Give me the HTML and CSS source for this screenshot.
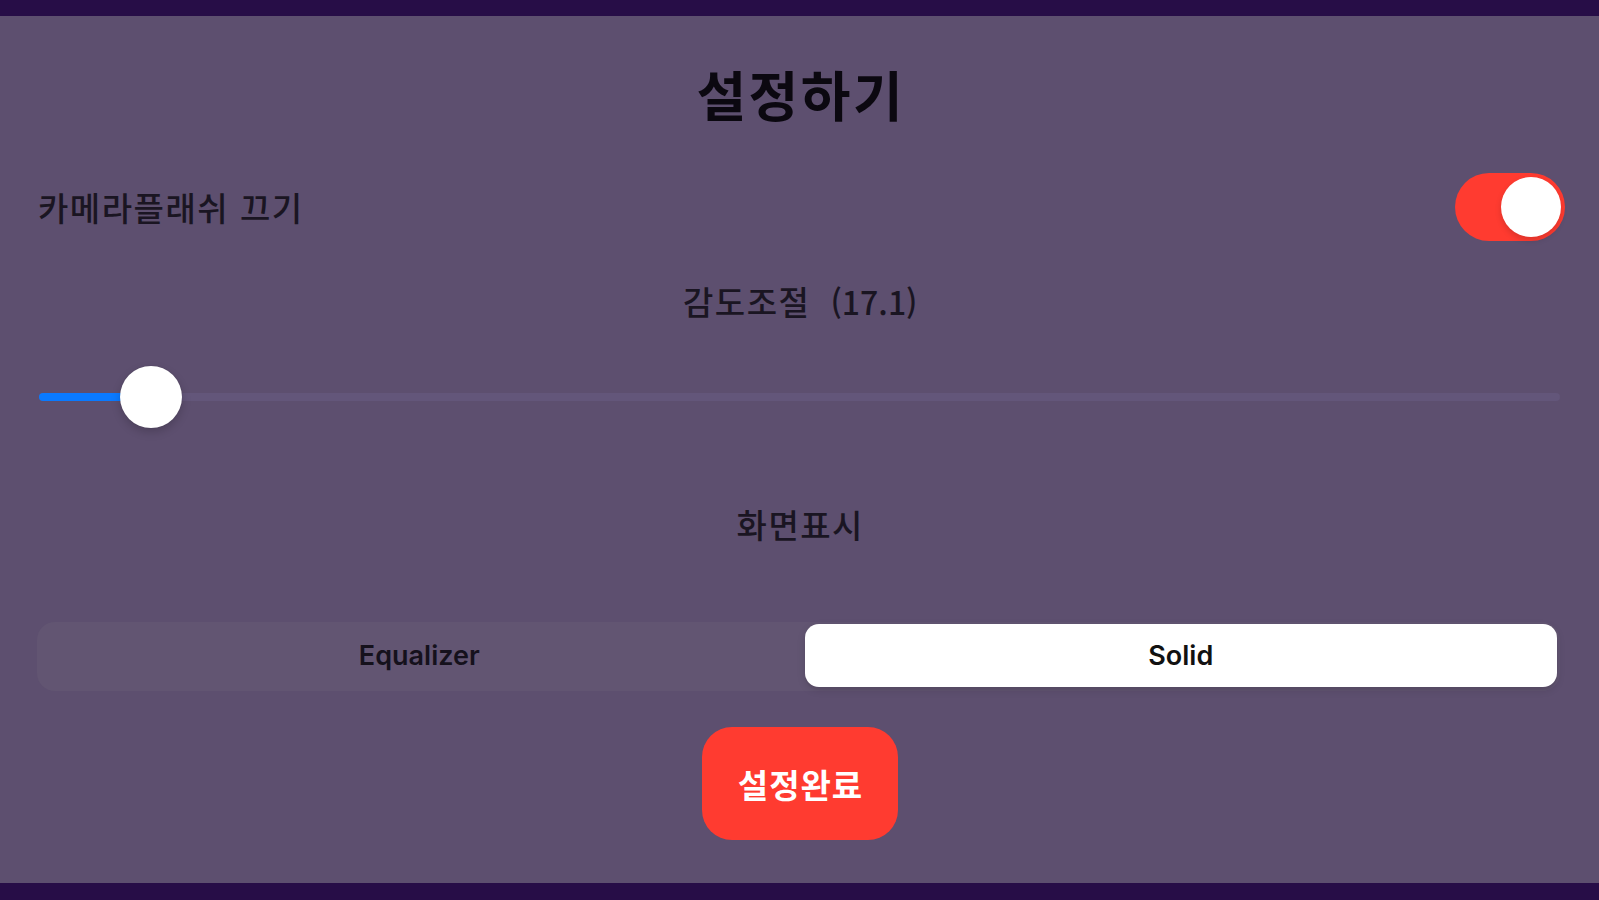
FILE: index.html
```html
<!DOCTYPE html>
<html lang="ko">
<head>
<meta charset="utf-8">
<title>설정하기</title>
<link rel="stylesheet" href="styles.css">
</head>
<body>
<div class="bar bar-top"></div>
<main class="content">
  <h1 class="title">설정하기</h1>
  <div class="row">
    <span class="label">카메라플래쉬 끄기</span>
    <div class="switch on"><div class="switch-knob"></div></div>
  </div>
  <div class="center-label">감도조절<span class="value">(17.1)</span></div>
  <div class="slider" style="--pct: 7.36%">
    <div class="slider-track"></div>
    <div class="slider-fill"></div>
    <div class="slider-knob"></div>
  </div>
  <div class="center-label display-label">화면표시</div>
  <div class="segmented">
    <div class="segment">Equalizer</div>
    <div class="segment selected">Solid</div>
  </div>
  <div class="actions">
    <button class="done-btn">설정완료</button>
  </div>
</main>
<div class="bar bar-bottom"></div>
</body>
</html>
```
FILE: styles.css
```css
* { box-sizing: border-box; }
html, body {
  margin: 0;
  padding: 0;
  height: 100%;
}
body {
  background: #5d4f6f;
  font-family: "Noto Sans CJK KR", "Noto Sans", sans-serif;
  color: #1a1522;
  display: flex;
  flex-direction: column;
  height: 900px;
  overflow: hidden;
}
.bar {
  background: #270d47;
  flex: 0 0 auto;
}
.bar-top { height: 16px; }
.bar-bottom { height: 17px; margin-top: auto; }

.content {
  flex: 1 1 auto;
  display: flex;
  flex-direction: column;
  padding: 0 37px;
}

.title {
  margin: 48px 0 0;
  font-size: 54px;
  line-height: 60px;
  font-weight: 700;
  letter-spacing: 2.5px;
  padding-left: 2.5px;
  text-align: center;
  color: #0b0810;
}

.row {
  margin-top: 49px;
  height: 68px;
  display: flex;
  align-items: center;
  justify-content: space-between;
}
.label {
  margin-left: 1px;
  font-size: 33px;
  line-height: 40px;
  font-weight: 500;
  letter-spacing: 1.5px;
}
.switch {
  width: 110px;
  height: 68px;
  border-radius: 34px;
  background: #ff3b30;
  margin-right: -3px;
  padding: 4px;
  display: flex;
  justify-content: flex-end;
}
.switch-knob {
  width: 60px;
  height: 60px;
  border-radius: 50%;
  background: #fff;
  box-shadow: 0 3px 6px rgba(0,0,0,0.15);
}

.center-label {
  margin-top: 40px;
  font-size: 33px;
  line-height: 40px;
  font-weight: 500;
  letter-spacing: 1.5px;
  padding-left: 1.5px;
  text-align: center;
}
.value {
  margin-left: 20px;
  font-size: 32px;
  letter-spacing: 0;
}

.slider {
  position: relative;
  margin: 45px 2px 0;
  height: 62px;
}
.slider-track {
  position: absolute;
  left: 0;
  right: 0;
  top: 27px;
  height: 8px;
  border-radius: 4px;
  background: #63567a;
}
.slider-fill {
  position: absolute;
  left: 0;
  top: 27px;
  height: 8px;
  width: var(--pct);
  border-radius: 4px;
  background: #0a7aff;
}
.slider-knob {
  position: absolute;
  top: 0;
  left: calc(var(--pct) - 31px);
  width: 62px;
  height: 62px;
  border-radius: 50%;
  background: #fff;
  box-shadow: 0 4px 10px rgba(0,0,0,0.18), 0 0 1px rgba(0,0,0,0.2);
}

.display-label {
  margin-top: 76px;
}

.segmented {
  margin: 78px 2px 0 0;
  height: 69px;
  padding: 2px 3px 4px;
  border-radius: 18px;
  background: #625572;
  display: grid;
  grid-template-columns: 1fr 1fr;
}
.segment {
  display: flex;
  align-items: center;
  justify-content: center;
  font-family: Inter, "Noto Sans", sans-serif;
  font-weight: 600;
  font-size: 27px;
  color: #15111c;
  border-radius: 14px;
}
.segment.selected {
  background: #fff;
  color: #111;
  margin-left: 6px;
  box-shadow: 0 3px 8px rgba(0,0,0,0.12), 0 3px 1px rgba(0,0,0,0.04);
}

.actions {
  margin-top: 36px;
  display: flex;
  justify-content: center;
}
.done-btn {
  width: 196px;
  height: 113px;
  border: none;
  border-radius: 30px;
  background: #ff3b30;
  color: #fff;
  font-family: "Noto Sans CJK KR", sans-serif;
  font-weight: 700;
  font-size: 33px;
  letter-spacing: 1px;
  padding: 0 0 0 1px;
  margin-left: 1px;
}
```
